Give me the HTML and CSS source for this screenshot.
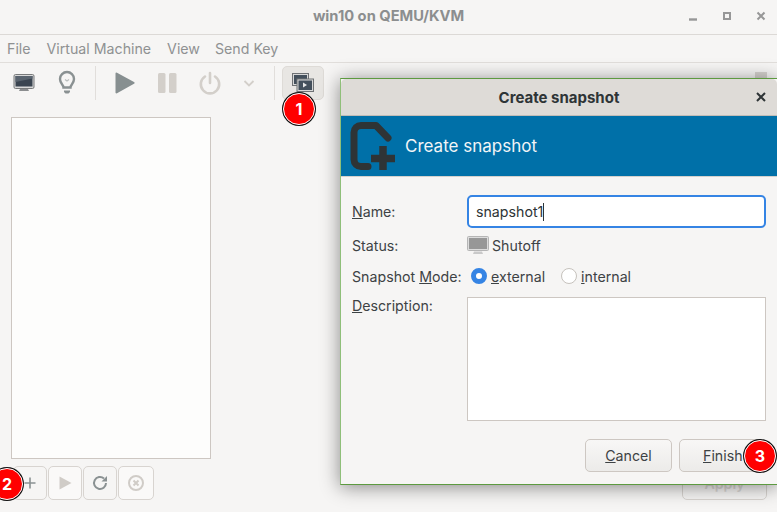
FILE: index.html
```html
<!DOCTYPE html>
<html lang="en">
<head>
    <meta charset="UTF-8">
    <meta name="viewport" content="width=device-width, initial-scale=1.0">
    <title>win10 on QEMU/KVM</title>
    <link rel="stylesheet" href="styles.css">
</head>
<body>
    <div class="main-window">
        <header class="titlebar">
            <span class="titlebar-name">win10 on QEMU/KVM</span>
            <div class="window-controls">
                <svg width="12" height="12" viewBox="0 0 12 12"><path d="M2 9.500h8" stroke="#979797" stroke-width="2.400"/></svg>
                <svg width="12" height="12" viewBox="0 0 12 12"><path d="M3 3h6v6H3z" fill="none" stroke="#979797" stroke-width="2"/></svg>
                <svg width="12" height="12" viewBox="0 0 12 12"><path d="M2.500 2.500l7 7M9.500 2.500l-7 7" stroke="#979797" stroke-width="2"/></svg>
            </div>
        </header>

        <nav class="menubar">
            <span>File</span>
            <span>Virtual Machine</span>
            <span>View</span>
            <span class="menu-last">Send Key</span>
        </nav>

        <div class="toolbar">
            <div class="tool">
                <svg width="24" height="24" viewBox="0 0 24 24">
                    <rect x="2" y="3.500" width="20" height="14" rx="1.500" fill="#d8d8d8" stroke="#77797a"/>
                    <rect x="3.500" y="5" width="17" height="10.500" fill="#3a4450"/>
                    <path d="M3.500 11L20.500 7.500V5h-17z" fill="#59636e"/>
                    <path d="M8 18h8l1 2H7z" fill="#8b8d8f"/>
                </svg>
            </div>
            <div class="tool">
                <svg width="24" height="26" viewBox="0 0 24 26">
                    <path d="M8.500 17.500c0-3-3.500-4-3.500-8.500a7 7 0 0 1 14 0c0 4.500-3.500 5.500-3.500 8.500z" fill="none" stroke="#8a9192" stroke-width="2.400"/>
                    <path d="M10 9.500l2 1.500 2-1.500" fill="none" stroke="#b9bdbd" stroke-width="1.200"/>
                    <path d="M9 20.500h6v1.500l-1.500 1.500h-3L9 22z" fill="#8a9192"/>
                </svg>
            </div>
            <div class="tool-sep"></div>
            <div class="tool">
                <svg width="24" height="24" viewBox="0 0 24 24"><path d="M3.500 2.500a1 1 0 0 1 1.500-.8l17 9.300a1 1 0 0 1 0 1.800l-17 9.500a1 1 0 0 1-1.500-.9z" fill="#878f90"/></svg>
            </div>
            <div class="tool">
                <svg width="24" height="24" viewBox="0 0 24 24"><rect x="3" y="2" width="7.500" height="20" rx="1.500" fill="#d3cfca"/><rect x="14" y="2" width="7.500" height="20" rx="1.500" fill="#d3cfca"/></svg>
            </div>
            <div class="tool">
                <svg width="24" height="24" viewBox="0 0 24 24"><path d="M7 5.500a9.200 9.200 0 1 0 10 0M12 2v10" fill="none" stroke="#d3cfca" stroke-width="2.600" stroke-linecap="round"/></svg>
            </div>
            <div class="tool tool-small">
                <svg width="12" height="12" viewBox="0 0 12 12"><path d="M1.500 4L6 8.500 10.500 4" fill="none" stroke="#d3cfca" stroke-width="1.800"/></svg>
            </div>
            <div class="tool-sep"></div>
            <div class="tool tool-active">
                <svg width="24" height="24" viewBox="0 0 24 24">
                    <rect x="1.500" y="2.500" width="16" height="12" fill="#d8d8d8" stroke="#6f7275"/>
                    <rect x="3" y="4" width="13" height="9" fill="#44505c"/>
                    <rect x="6" y="8" width="16.500" height="12.500" fill="#d8d8d8" stroke="#6f7275"/>
                    <rect x="7.500" y="9.500" width="13.500" height="9.500" fill="#44505c"/>
                    <path d="M12 11.500l4 2.500-4 2.500z" fill="#e6e6e6"/>
                </svg>
            </div>
        </div>

        <div class="content">
            <div class="snapshot-list"></div>
            <div class="list-buttons">
                <div class="icon-button">
                    <svg width="16" height="16" viewBox="0 0 16 16"><path d="M8 2.500v11M2.500 8h11" stroke="#8a9192" stroke-width="1.600"/></svg>
                </div>
                <div class="icon-button icon-button-off">
                    <svg width="16" height="16" viewBox="0 0 16 16"><path d="M2.500 1.500L14.500 8 2.500 14.500z" fill="#d0ccc7"/></svg>
                </div>
                <div class="icon-button">
                    <svg width="18" height="18" viewBox="0 0 18 18"><path d="M15 9a6 6 0 1 1-2-4.500" fill="none" stroke="#8a9192" stroke-width="2"/><path d="M16 2v5.500h-5.500z" fill="#8a9192"/></svg>
                </div>
                <div class="icon-button icon-button-off icon-button-wide">
                    <svg width="18" height="18" viewBox="0 0 18 18"><circle cx="9" cy="9" r="7" fill="none" stroke="#d0ccc7" stroke-width="2"/><path d="M6.500 6.500l5 5M11.500 6.500l-5 5" stroke="#d0ccc7" stroke-width="2"/></svg>
                </div>
            </div>
        </div>
    </div>

    <div class="hidden-tool"></div>
    <div class="apply-button">Apply</div>

    <div class="dialog">
        <div class="dialog-title">
            <span>Create snapshot</span>
            <svg class="dialog-close" width="12" height="12" viewBox="0 0 12 12"><path d="M2 2l8 8M10 2l-8 8" stroke="#2e3436" stroke-width="2"/></svg>
        </div>
        <div class="dialog-banner">
            <svg width="48" height="50" viewBox="0 0 48 50">
                <path d="M19 45.500H12a7 7 0 0 1-7-7V11.500a7 7 0 0 1 7-7H27L39 17" fill="none" stroke="#2e3436" stroke-width="7" stroke-linecap="round" stroke-linejoin="round"/>
                <path d="M34 25v24M22 37.500h24" stroke="#2e3436" stroke-width="7.500"/>
            </svg>
            <span>Create snapshot</span>
        </div>
        <div class="dialog-form">
            <div class="form-label"><u>N</u>ame:</div>
            <div class="name-entry">snapshot1<i class="caret"></i></div>

            <div class="form-label">Status:</div>
            <div class="status-value">
                <svg width="22" height="22" viewBox="0 0 22 22">
                    <rect x="0.500" y="2.500" width="21" height="14" rx="1" fill="#dcdcdc" stroke="#b5b5b5"/>
                    <rect x="2" y="4" width="18" height="11" fill="#979797"/>
                    <path d="M7 17.500h8l1 2.500H6z" fill="#c9c9c9"/>
                </svg>
                <span>Shutoff</span>
            </div>

            <div class="form-label">Snapshot <u>M</u>ode:</div>
            <div class="mode-options">
                <span class="radio radio-on"></span><span class="radio-text"><u>e</u>xternal</span>
                <span class="radio radio-second"></span><span class="radio-text"><u>i</u>nternal</span>
            </div>

            <div class="form-label form-label-top"><u>D</u>escription:</div>
            <div class="description"></div>
        </div>
        <div class="dialog-buttons">
            <div class="push-button"><u>C</u>ancel</div>
            <div class="push-button push-button-finish"><u>F</u>inish</div>
        </div>
    </div>

    <div class="badge badge-one">1</div>
    <div class="badge badge-two">2</div>
    <div class="badge badge-three">3</div>
</body>
</html>
```

FILE: styles.css
```css
body {
    margin: 0;
    width: 777px;
    height: 512px;
    overflow: hidden;
    position: relative;
    background-color: #f6f5f4;
    color: #55595a;
    font-family: Inter, "Noto Sans", sans-serif;
    font-size: 14.2px;
}
.titlebar {
    height: 32px;
    padding-bottom: 2px;
    border-bottom: 1px solid #dcd9d6;
    display: flex;
    align-items: center;
    justify-content: center;
    position: relative;
}
.titlebar-name {
    font-weight: 700;
    font-size: 14.700px;
    color: #8c8e8f;
}
.window-controls {
    position: absolute;
    right: 10px;
    top: 10px;
    display: flex;
    gap: 22px;
}
.menubar {
    height: 27px;
    border-bottom: 1px solid #e1dedb;
    display: flex;
    align-items: center;
    gap: 16px;
    padding-left: 7px;
    color: #8f9192;
}
.menu-last {
    margin-left: -1px;
}
.toolbar {
    display: flex;
    align-items: center;
    height: 40px;
    padding-left: 9px;
}
.tool {
    width: 30px;
    height: 34px;
    margin-right: 13px;
    display: flex;
    align-items: center;
    justify-content: center;
}
.tool-small {
    width: 20px;
    margin-left: 1px;
    margin-right: 15px;
}
.tool-sep {
    width: 1px;
    height: 34px;
    background-color: #e1dedb;
    margin-right: 13px;
}
.tool-active {
    width: 42px;
    margin-left: -6px;
    background-color: #e8e6e3;
    border-radius: 5px;
    border: 1px solid #dedbd7;
    box-sizing: border-box;
}
.content {
    padding: 14px 0 0 11px;
}
.snapshot-list {
    width: 198px;
    height: 340px;
    background-color: #fdfdfc;
    border: 1px solid #cdc7c2;
}
.list-buttons {
    display: flex;
    gap: 1px;
    margin: 7px 0 0 2px;
}
.icon-button {
    width: 34px;
    height: 34px;
    box-sizing: border-box;
    border: 1px solid #d8d4d0;
    border-radius: 5px;
    display: flex;
    align-items: center;
    justify-content: center;
}
.icon-button-off {
    background-color: #faf9f8;
}
.icon-button-wide {
    width: 36px;
}
.hidden-tool {
    position: absolute;
    left: 755px;
    top: 72px;
    width: 12px;
    height: 6px;
    background-color: #d6d3cf;
}
.apply-button {
    position: absolute;
    left: 682px;
    top: 468px;
    width: 83px;
    height: 30px;
    border: 1px solid #d8d4d0;
    border-radius: 5px;
    color: #dbd8d4;
    font-weight: 600;
    text-align: center;
    line-height: 30px;
}
.dialog {
    position: absolute;
    left: 340px;
    top: 78px;
    width: 437px;
    height: 407px;
    box-sizing: border-box;
    background-color: #f6f5f4;
    border-left: 1px solid #8fbf79;
    border-top: 1px solid #5d9a40;
    border-bottom: 1px solid #5d9a40;
    box-shadow: 0 2px 18px rgba(0, 0, 0, 0.45);
    color: #3d4244;
}
.dialog-title {
    height: 36px;
    background-color: #dedbd7;
    border-bottom: 1px solid #c0bcb7;
    display: flex;
    align-items: center;
    justify-content: center;
    font-weight: 700;
    font-size: 15px;
    color: #2e3436;
    border-radius: 5px 5px 0 0;
    position: relative;
}
.dialog-close {
    position: absolute;
    right: 10px;
    top: 12px;
}
.dialog-banner {
    height: 60px;
    background-color: #0070a8;
    display: flex;
    align-items: center;
    gap: 8px;
    padding-left: 8px;
    color: #f2f5f7;
    font-size: 17px;
    border-bottom: 1px solid #d4d1cd;
}
.dialog-form {
    display: grid;
    grid-template-columns: 115px 299px;
    grid-template-rows: 33px 34px 28px 131px;
    padding: 18px 0 0 11px;
    align-items: center;
}
.form-label-top {
    align-self: start;
    margin-top: 7px;
}
.name-entry {
    height: 33px;
    box-sizing: border-box;
    border: 2px solid #3584e4;
    border-radius: 5px;
    background-color: #fff;
    padding-left: 7px;
    line-height: 29px;
    color: #2e3436;
}
.caret {
    display: inline-block;
    width: 1px;
    height: 18px;
    background-color: #2e3436;
    vertical-align: -4px;
}
.status-value {
    display: flex;
    align-items: center;
    gap: 3px;
}
.mode-options {
    display: flex;
    align-items: center;
}
.radio {
    width: 16px;
    height: 16px;
    box-sizing: border-box;
    border-radius: 50%;
    border: 1px solid #c6c2bd;
    background-color: #fff;
    margin-right: 4px;
    margin-left: 4px;
}
.radio-on {
    border: 5px solid #3584e4;
}
.radio-second {
    margin-left: 16px;
}
.description {
    height: 124px;
    box-sizing: border-box;
    background-color: #fff;
    border: 1px solid #cdc7c2;
    align-self: end;
}
.dialog-buttons {
    display: flex;
    gap: 7px;
    padding: 18px 0 0 244px;
}
.push-button {
    width: 87px;
    height: 33px;
    box-sizing: border-box;
    border: 1px solid #cdc7c2;
    border-radius: 5px;
    background-image: linear-gradient(#f8f7f6, #ecebe9);
    text-align: center;
    line-height: 31px;
}
.push-button-finish {
    width: 86px;
    text-align: left;
    padding-left: 23px;
}
.badge {
    position: absolute;
    width: 32px;
    height: 32px;
    box-sizing: border-box;
    border-radius: 50%;
    background-color: #f00;
    border: 1px solid #fff;
    box-shadow: 0 0 0 1px #111;
    color: #fff;
    font-weight: 700;
    font-size: 16px;
    display: flex;
    align-items: center;
    justify-content: center;
}
.badge-one {
    left: 283px;
    top: 93px;
}
.badge-two {
    left: -9px;
    top: 468px;
}
.badge-three {
    left: 744px;
    top: 440px;
}
```
